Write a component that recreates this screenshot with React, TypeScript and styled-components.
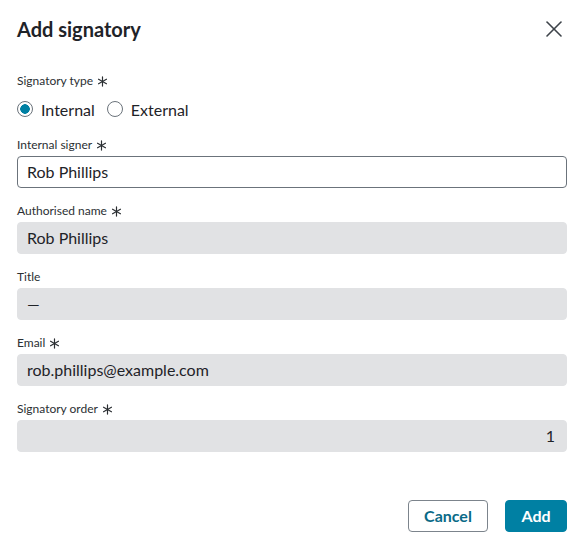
import React, { useState } from "react";
import styled, { createGlobalStyle } from "styled-components";

const GlobalStyle = createGlobalStyle`
  html, body {
    margin: 0;
    padding: 0;
    background: #fff;
  }
  body {
    font-family: Lato, "Liberation Sans", Arial, sans-serif;
    color: #1f2328;
  }
`;

const Asterisk: React.FC = () => (
  <svg width="11" height="11" viewBox="0 0 12 12" aria-hidden="true">
    <g stroke="#2b2f33" strokeWidth="1.3" strokeLinecap="round">
      <line x1="6" y1="1" x2="6" y2="11" />
      <line x1="1.7" y1="3.5" x2="10.3" y2="8.5" />
      <line x1="1.7" y1="8.5" x2="10.3" y2="3.5" />
    </g>
  </svg>
);

const CloseIcon: React.FC = () => (
  <svg width="18" height="18" viewBox="0 0 18 18" aria-hidden="true">
    <g stroke="#3d4349" strokeWidth="1.6" strokeLinecap="round">
      <line x1="2" y1="2" x2="16" y2="16" />
      <line x1="16" y1="2" x2="2" y2="16" />
    </g>
  </svg>
);

type Field = {
  label: string;
  value: string;
  required?: boolean;
  editable?: boolean;
  alignRight?: boolean;
};

const fields: Field[] = [
  { label: "Internal signer", value: "Rob Phillips", required: true, editable: true },
  { label: "Authorised name", value: "Rob Phillips", required: true },
  { label: "Title", value: "—" },
  { label: "Email", value: "rob.phillips@example.com", required: true },
  { label: "Signatory order", value: "1", required: true, alignRight: true },
];

export default function App() {
  const [type, setType] = useState<"internal" | "external">("internal");

  return (
    <>
      <GlobalStyle />
      <Dialog>
        <Header>
          <Title>Add signatory</Title>
          <CloseButton aria-label="Close">
            <CloseIcon />
          </CloseButton>
        </Header>

        <Body>
          <Group>
            <Label>
              Signatory type <Asterisk />
            </Label>
            <RadioRow>
              <RadioOption onClick={() => setType("internal")}>
                <RadioCircle $checked={type === "internal"} />
                Internal
              </RadioOption>
              <RadioOption onClick={() => setType("external")}>
                <RadioCircle $checked={type === "external"} />
                External
              </RadioOption>
            </RadioRow>
          </Group>

          {fields.map((f) => (
            <Group key={f.label}>
              <Label>
                {f.label} {f.required && <Asterisk />}
              </Label>
              <InputBox $editable={f.editable} $alignRight={f.alignRight}>
                {f.value}
              </InputBox>
            </Group>
          ))}
        </Body>

        <Footer>
          <SecondaryButton>Cancel</SecondaryButton>
          <PrimaryButton>Add</PrimaryButton>
        </Footer>
      </Dialog>
    </>
  );
}

const Dialog = styled.div`
  width: 579px;
  height: 542px;
  box-sizing: border-box;
  padding: 16px 12px 10px 17px;
  display: flex;
  flex-direction: column;
`;

const Header = styled.div`
  display: flex;
  align-items: center;
  justify-content: space-between;
  height: 26px;
`;

const Title = styled.h2`
  margin: 0;
  font-size: 20px;
  font-weight: 700;
  line-height: 26px;
  color: #1f2328;
`;

const CloseButton = styled.button`
  border: none;
  background: none;
  padding: 0;
  margin-right: 3px;
  width: 20px;
  height: 20px;
  display: flex;
  align-items: center;
  justify-content: center;
  cursor: pointer;
`;

const Body = styled.div`
  display: flex;
  flex-direction: column;
  gap: 15px;
  margin-top: 31px;
  width: 550px;
`;

const Group = styled.div`
  display: flex;
  flex-direction: column;
`;

const Label = styled.div`
  display: flex;
  align-items: center;
  gap: 4px;
  font-size: 12px;
  line-height: 16px;
  color: #2b2f33;
  margin-bottom: 3px;
`;

const RadioRow = styled.div`
  display: flex;
  align-items: center;
  gap: 12px;
  height: 24px;
  margin-top: 5px;
  margin-bottom: 1px;
`;

const RadioOption = styled.label`
  display: flex;
  align-items: center;
  gap: 8px;
  font-size: 16px;
  color: #1f2328;
  cursor: pointer;
`;

const RadioCircle = styled.span<{ $checked: boolean }>`
  width: 16px;
  height: 16px;
  box-sizing: border-box;
  border-radius: 50%;
  border: 1px solid #6b737b;
  background: ${(p) =>
    p.$checked ? "radial-gradient(circle, #0080a3 0 4.5px, #fff 5px)" : "#fff"};
`;

const InputBox = styled.div<{ $editable?: boolean; $alignRight?: boolean }>`
  box-sizing: border-box;
  height: 32px;
  padding: 0 11px 1px 9px;
  display: flex;
  align-items: center;
  justify-content: ${(p) => (p.$alignRight ? "flex-end" : "flex-start")};
  font-size: 16px;
  color: #1f2328;
  border-radius: 4px;
  background: ${(p) => (p.$editable ? "#fff" : "#e1e2e4")};
  border: 1px solid ${(p) => (p.$editable ? "#6b737b" : "#e1e2e4")};
`;

const Footer = styled.div`
  margin-top: auto;
  display: flex;
  justify-content: flex-end;
  gap: 17px;
  width: 550px;
`;

const BaseButton = styled.button`
  height: 32px;
  box-sizing: border-box;
  padding: 0 0 1px;
  border-radius: 4px;
  font-family: Lato, "Liberation Sans", Arial, sans-serif;
  font-size: 16px;
  font-weight: 700;
  cursor: pointer;
`;

const SecondaryButton = styled(BaseButton)`
  width: 80px;
  background: #fff;
  color: #0a6a87;
  border: 1px solid #7c848c;
`;

const PrimaryButton = styled(BaseButton)`
  width: 62px;
  background: #0080a3;
  color: #fff;
  border: 1px solid #0080a3;
`;
